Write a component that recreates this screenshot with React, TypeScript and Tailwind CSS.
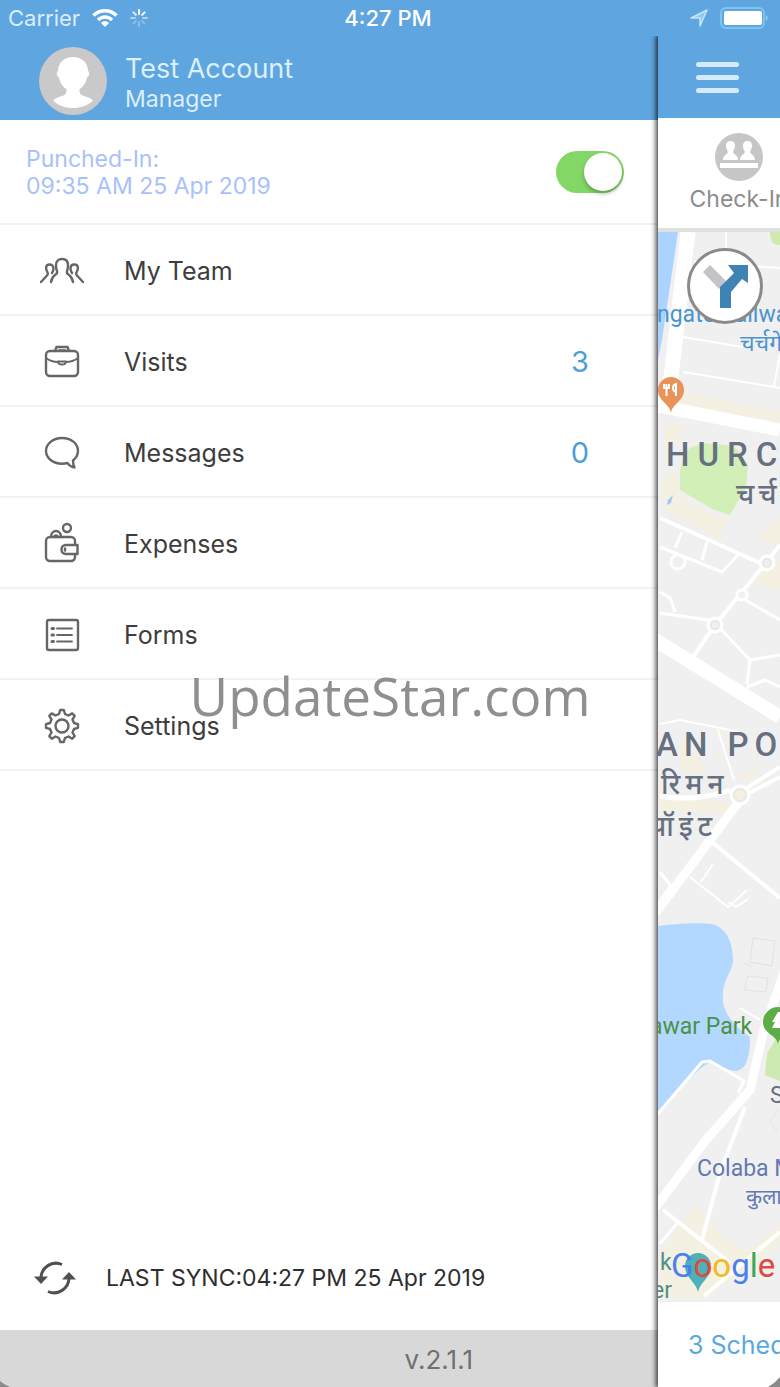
import { useState } from 'react';
import type { ReactNode } from 'react';

type MenuItem = {
    label: string;
    icon: ReactNode;
    count?: number;
};

const line = {
    fill: 'none',
    stroke: '#666666',
    strokeWidth: 2.4,
    strokeLinecap: 'round' as const,
    strokeLinejoin: 'round' as const,
};

function TeamIcon() {
    return (
        <svg viewBox="0 0 44 44" className="h-11 w-11" {...line}>
            <path d="M11 33c.5-3 1-5 4-7 2-1 2.500-2 2-4-1-1.500-1-3-1-6 0-4 2.500-6 6-6s6 2 6 6c0 3 0 4.500-1 6-.5 2 0 3 2 4 3 2 3.500 4 4 7" />
            <path d="M1 33l6-6.500c1-1 1-2 .5-3C5 19 6 15.500 9.500 15.500c2.500 0 4 1.500 4 4 0 2-.5 3-1.500 4.500" />
            <path d="M43 33l-6-6.500c-1-1-1-2-.5-3C39 19 38 15.500 34.500 15.500c-2.500 0-4 1.500-4 4 0 2 .5 3 1.500 4.500" />
        </svg>
    );
}

function BriefcaseIcon() {
    return (
        <svg viewBox="0 0 44 44" className="h-11 w-11" {...line}>
            <rect x="6" y="11" width="32" height="25" rx="4" />
            <path d="M15 11l1.500-4h11L29 11M19 10.500h6" />
            <path d="M6 18c4 3 8 4 12 4M38 18c-4 3-8 4-12 4M18 21.500h8c0 4-8 4-8 0z" strokeWidth="1.800" />
        </svg>
    );
}

function BubbleIcon() {
    return (
        <svg viewBox="0 0 44 44" className="h-11 w-11" {...line}>
            <path d="M22 7c9 0 16 5.500 16 13 0 4-2 7-5 9.500 0 3 .5 5 1.500 7-3-.5-5.500-2-7-4.500-1.800.5-3.500.7-5.500.7C13 32.700 6 27 6 20S13 7 22 7z" />
        </svg>
    );
}

function WalletIcon() {
    return (
        <svg viewBox="0 0 44 44" className="h-11 w-11" {...line}>
            <rect x="6" y="15" width="29" height="24" rx="4" />
            <path d="M11 15c0-8 10-8 10 0M14.500 15c0-2 3-2 3 0" />
            <circle cx="27" cy="6" r="4" />
            <path d="M37.500 23H26c-6 0-6 9 0 9h11.500z" fill="white" />
            <path d="M25 26.500v2" />
        </svg>
    );
}

function FormIcon() {
    return (
        <svg viewBox="0 0 44 44" className="h-11 w-11" {...line}>
            <rect x="7" y="7" width="31" height="30" rx="2" />
            <path d="M17 15.500h15M17 22h15M17 28.500h15" strokeWidth="1.800" />
            <path d="M12 15.500h1.500M12 22h1.500M12 28.500h1.500" strokeWidth="3" />
        </svg>
    );
}

function GearIcon() {
    return (
        <svg viewBox="0 0 44 44" className="h-11 w-11" {...line}>
            <circle cx="22" cy="22" r="6.500" />
            <path d="M19 10l1.200-4h3.600L25 10l3.500 1.500L32.200 9.400l2.500 2.500L32.500 15.500 34 19l4 1.200v3.600L34 25l-1.500 3.500 2.200 3.700-2.500 2.500-3.700-2.200L25 34l-1.200 4h-3.600L19 34l-3.500-1.500-3.700 2.200-2.500-2.500 2.200-3.700L10 25l-4-1.200v-3.600L10 19l1.500-3.500-2.200-3.600 2.500-2.500 3.700 2.100z" />
        </svg>
    );
}

const menu: MenuItem[] = [
    { label: 'My Team', icon: <TeamIcon /> },
    { label: 'Visits', icon: <BriefcaseIcon />, count: 3 },
    { label: 'Messages', icon: <BubbleIcon />, count: 0 },
    { label: 'Expenses', icon: <WalletIcon /> },
    { label: 'Forms', icon: <FormIcon /> },
    { label: 'Settings', icon: <GearIcon /> },
];

function StatusBar() {
    return (
        <div className="relative z-20 grid h-9 grid-cols-3 items-center bg-[#5fa5e0] pr-3 pl-2 text-[22px] leading-9 text-white">
            <div className="flex items-center gap-3 text-[#d9eefb]">
                <span>Carrier</span>
                <svg viewBox="0 0 26 20" className="h-5 w-[26px]" fill="none" stroke="white" strokeWidth="3.500">
                    <path d="M1.500 7.500c6.500-6.500 16.500-6.500 23 0M6 12c4-4 10-4 14 0" />
                    <path d="M13 19l-4-4c2-2.200 6-2.200 8 0z" fill="white" stroke="none" />
                </svg>
                <svg viewBox="0 0 18 18" className="h-[18px] w-[18px]" stroke="white" strokeWidth="2" strokeLinecap="round">
                    <path d="M9 1v4M14.600 3.400l-2.500 2.500" />
                    <path d="M3.400 3.400l2.500 2.500" opacity=".8" />
                    <path d="M17 9h-4M1 9h4" opacity=".5" />
                    <path d="M3.400 14.600l2.500-2.500M9 17v-4M14.600 14.600l-2.500-2.500" opacity=".3" />
                </svg>
            </div>
            <span className="text-center font-medium">4:27 PM</span>
            <div className="flex items-center justify-end gap-3">
                <svg viewBox="0 0 18 18" className="h-[18px] w-[18px]" fill="#8ccaf3" stroke="#c5e6fa" strokeWidth="1.500" strokeLinejoin="round">
                    <path d="M1 9l16-8-7 16V9z" />
                </svg>
                <svg viewBox="0 0 48 22" className="h-[22px] w-12">
                    <rect x="1" y="1" width="43" height="20" rx="5" fill="none" stroke="#7cc4f2" strokeWidth="2" />
                    <rect x="4" y="4" width="38" height="14" rx="2" fill="white" />
                    <path d="M46 8c2 1 2 5 0 6z" fill="#9fd3f5" />
                </svg>
            </div>
        </div>
    );
}

function Drawer() {
    const [punchedIn, setPunchedIn] = useState(true);

    return (
        <aside className="flex min-w-0 flex-1 flex-col bg-white">
            {/* Profile */}
            <header className="flex h-[84px] items-center gap-[18px] bg-[#5fa5e0] pt-1.5 pl-[39px] text-[#dceffc]">
                <svg viewBox="0 0 68 68" className="h-[68px] w-[68px]">
                    <circle cx="34" cy="34" r="34" fill="#c9c9c9" />
                    <path d="M34 10c9 0 15 6 15 14 2 1 1.500 5-1 6.500C47 36 44 40 40.500 42c0 3 0 5 3 6.500 4 1.500 8 2 10.500 5C48 59 42 61 34 61s-14-2-20-7.500c2.500-3 6.500-3.500 10.500-5 3-1.500 3-3.500 3-6.500C24 40 21 36 20 30.500c-2.500-1.500-3-5.500-1-6.500 0-8 6-14 15-14z" fill="white" />
                </svg>
                <div className="pt-1">
                    <h1 className="text-[27px] leading-8">Test Account</h1>
                    <p className="text-[23px] leading-7">Manager</p>
                </div>
            </header>

            {/* Punch-in state */}
            <div className="flex h-[105px] items-center justify-between border-b-2 border-[#f2f2f2] pr-[34px] pl-[26px]">
                <label htmlFor="punch" className="pt-0.5 text-[23px] leading-[27px] text-[#a9c1fb]">
                    Punched-In:
                    <br />
                    09:35 AM 25 Apr 2019
                </label>
                <input
                    id="punch"
                    type="checkbox"
                    role="switch"
                    checked={punchedIn}
                    onChange={(e) => setPunchedIn(e.target.checked)}
                    className="flex h-[42px] w-[68px] cursor-pointer appearance-none items-center rounded-full bg-gray-300 p-0.5 transition-colors before:h-[38px] before:w-[38px] before:rounded-full before:bg-white before:shadow-[0_3px_4px_rgba(0,0,0,0.25)] before:content-[''] checked:justify-end checked:bg-[#83d767]"
                />
            </div>

            <nav>
                {menu.map((item) => (
                    <button
                        key={item.label}
                        className="flex h-[91px] w-full cursor-pointer items-center border-b-2 border-[#f2f2f2] pt-0.5 pr-[69px] pl-10 text-left hover:bg-gray-50"
                    >
                        {item.icon}
                        <span className="ml-10 flex-1 text-[25px] leading-8 text-[#3d3d3d]">{item.label}</span>
                        {item.count !== undefined && (
                            <span className="text-[29px] leading-8 text-[#4b9fd9]">{item.count}</span>
                        )}
                    </button>
                ))}
            </nav>

            {/* Sync + version */}
            <button className="mt-auto flex h-[104px] cursor-pointer items-center gap-[30px] pl-[34px] text-left text-[23px] text-[#2e2e2e]">
                <svg viewBox="0 0 42 34" className="h-[34px] w-[42px]" fill="none" stroke="#505050" strokeWidth="3">
                    <path d="M28 3.500A15 15 0 0 0 7 17M14 30.500A15 15 0 0 0 35 17" />
                    <path d="M0 15.500h14L7 23zM28 18.500h14L35 11z" fill="#505050" stroke="none" />
                </svg>
                <span>LAST SYNC:04:27 PM 25 Apr 2019</span>
            </button>
            <footer className="flex h-[57px] items-center justify-end bg-[#d8d8d8] pt-0.5 pr-[185px] text-[26px] text-[#707070]">
                v.2.1.1
            </footer>
        </aside>
    );
}

function MapCanvas() {
    return (
        <svg viewBox="0 0 122 1070" preserveAspectRatio="xMinYMin slice" className="h-full w-full bg-[#f0f0f0]">
            {/* Parks, built-up blocks and water */}
            <path d="M0 0h20L4 108l-4 20z" fill="#aad4ff" />
            <path d="M112 0h10v13c-6 1-10-3-10-13z" fill="#cdebb0" />
            <g fill="#f5f1e2">
                <path d="M26 160l96 20v12L22 172zM8 190l18 4-6 16-14 8zM2 252l14-18 6 30 34 20 16 2-12 22-22-14-30-14zM100 305l22-20v30zM94 350l28-22v30zM20 510l8-4 20 36-24-4zM2 566l70 4-6 12-64-4zM76 545l24-10-8 14zM2 1020l34-46 30 30 24 16 32-28v20l-74 54H2z" />
            </g>
            <path d="M22 240c2-12 4-20 10-24l12-5 32 3 14 18-2 24-16 27-18-6-32-19z" fill="#d3efb8" />
            <path d="M10 268l5-5-2 8-4 2z" fill="#9ccbf9" />
            <path d="M0 694c14-2 38-4 55-2 12 4 20 16 20 36 0 12-12 20-10 42 2 14 14 26 27 35 0 20-4 34-15 34-9 0-18-9-25-9-18 10-34 32-52 51z" fill="#b3d8ff" />
            <path d="M109 821l13-20v48l-15-6z" fill="#cdebb0" />

            {/* Streets */}
            <g fill="none" stroke="white" strokeLinejoin="round">
                <path d="M30 0L13 145 6 175" strokeWidth="15" />
                <path d="M0 174l122 24" strokeWidth="13" />
                <path d="M-6 406l128 79" strokeWidth="14" />
                <path d="M80 571L-4 683M128 735l-23 66-13 57-44 50-54 72" strokeWidth="9" />
                <path d="M2 286l100 45M122 313l-20 25-45 55-22 32M55 611l67 55M89 556l33-21M89 562l33-17M5 978l67 53M46 1064l76-64M87 875l-25 66-18 67" strokeWidth="4" />
                <path d="M2 381l55 8M57 391l35 37 30-5M92 428l-3 24M84 366l38 22M2 315l62 25 16-17M17 316l7-16M44 328l5-18M2 360l10 6 5 14M89 455l18-7 15 7M2 640l12 15M-2 884l46-54 8-1 34 20-6 12M2 1012l18-22" strokeWidth="3" />
                <path d="M68 0v20M36 30l86 6M25 105l60 10M25 140l97 16M122 122l-6 32M32 645l38 30 19-17M43 650l12-18M82 776l20 12M60 498l16 50M2 492l20-4 60 12M2 668l10-14M70 670l8 5 12-8" strokeWidth="2" />
                <path d="M2 564c20 4 50 2 70-6" strokeWidth="5" />
            </g>
            <g fill="#f0f0f0" stroke="white" strokeWidth="3">
                <circle cx="109" cy="331" r="7" />
                <circle cx="84" cy="363" r="5" />
                <circle cx="57" cy="393" r="7" />
                <circle cx="20" cy="330" r="7" />
                <circle cx="82" cy="563" r="9" fill="#f5f1e2" />
            </g>
            <g fill="none" stroke="#e2e2e2">
                <path d="M95 706l22 3-3 25-22-4zM90 744l20 2-2 14-22-2zM94 735l-8-4M120 878l-8 12 8 10" />
                <circle cx="57" cy="393" r="4" />
                <circle cx="109" cy="331" r="4" />
                <circle cx="82" cy="563" r="6" />
            </g>

            {/* Place pins */}
            <path d="M13 181c-1-9-13-12-13-23a13 13 0 0 1 26 0c0 11-12 14-13 23z" fill="#e8935a" />
            <path d="M6 152v4h5v-4M8.500 152v12M18 164v-12c-4 1-4 7 0 8" fill="none" stroke="white" strokeWidth="2" />
            <path d="M120 812c-1-9-15-10-15-22a15 15 0 0 1 30 0c0 12-14 13-15 22z" fill="#5cad45" />
            <path d="M120 780l-6 10h3l-3 6h12v-16z" fill="white" />
            <path d="M40 1060c-2-10-13-14-13-26a13 13 0 0 1 26 0c0 12-11 16-13 26z" fill="#4fb0b8" />
        </svg>
    );
}

function MapPanel() {
    return (
        <main className="relative z-10 flex w-[122px] shrink-0 flex-col bg-white shadow-[-1px_0_5px_1px_rgba(0,0,0,0.75)]">
            <div className="flex h-[82px] items-center bg-[#5fa5e0] pl-[38px]">
                <button aria-label="Menu" className="flex h-[31px] w-[43px] cursor-pointer flex-col justify-between">
                    <span className="h-[5px] w-full rounded-sm bg-[#d5ebfa]" />
                    <span className="h-[5px] w-full rounded-sm bg-[#d5ebfa]" />
                    <span className="h-[5px] w-full rounded-sm bg-[#d5ebfa]" />
                </button>
            </div>

            <div className="h-[114px] overflow-hidden border-b-4 border-[#dfe1dd] pt-[15px] pl-[33px]">
                <button className="flex w-24 cursor-pointer flex-col items-center gap-1 text-[23px] leading-7 whitespace-nowrap text-[#8c8c8c]">
                    <svg viewBox="0 0 48 48" className="h-12 w-12">
                        <circle cx="24" cy="24" r="24" fill="#c6c6c6" />
                        <path d="M8 27c0-5 4-5 5-8-3-5-3-11 2.500-11s5.500 6 2.500 11c1 3 5 3 5 8zM25 27c0-5 4-5 5-8-3-5-3-11 2.500-11s5.500 6 2.500 11c1 3 5 3 5 8zM5 30h38v5H5z" fill="white" />
                    </svg>
                    Check-In
                </button>
            </div>

            <div className="relative flex-1 overflow-hidden font-[Roboto,'Noto_Sans',sans-serif] whitespace-nowrap">
                <div className="absolute inset-0">
                    <MapCanvas />
                </div>
                <span className="absolute top-[69px] -left-px text-[23px] leading-7 text-[#4a94cf]">ngate Railway</span>
                <span className="absolute top-[96px] left-[82px] text-[23px] leading-8 text-[#4a94cf]">चर्चगेट</span>
                <span className="absolute top-[203px] left-[8px] text-[33px] leading-10 font-medium tracking-[8px] text-[#66707f]">HURCHGATE</span>
                <span className="absolute top-[243px] left-[78px] text-[28px] leading-10 font-medium tracking-[4px] text-[#66707f]">चर्चगेट</span>
                <span className="absolute top-[493px] -left-[2px] text-[33px] leading-10 font-medium tracking-[6px] text-[#66707f]">AN POINT</span>
                <span className="absolute top-[533px] left-[3px] text-[28px] leading-10 font-medium tracking-[5px] text-[#66707f]">रिमन</span>
                <span className="absolute top-[575px] -left-[8px] text-[28px] leading-10 font-medium tracking-[5px] text-[#66707f]">पॉइंट</span>
                <span className="absolute top-[781px] -left-[8px] text-[23px] leading-7 text-[#4c9145]">awar Park</span>
                <span className="absolute top-[850px] left-[112px] text-[23px] leading-7 text-[#66707f]">Sassoon</span>
                <span className="absolute top-[923px] left-[39px] text-[23px] leading-7 text-[#6478b4]">Colaba Market</span>
                <span className="absolute top-[949px] left-[88px] text-[21px] leading-8 text-[#6478b4]">कुलाबा</span>
                <span className="absolute top-[1017px] left-[2px] text-[23px] leading-7 text-[#4f8f8c]">k</span>
                <span className="absolute top-[1045px] -left-[6px] text-[23px] leading-7 text-[#4f8f8c]">er</span>
                <span className="absolute top-[1014px] left-[13px] text-[33px] leading-10">
                    <span className="text-[#4a80ee]">G</span>
                    <span className="text-[#dd4b40]">o</span>
                    <span className="text-[#f2b91d]">o</span>
                    <span className="text-[#4a80ee]">g</span>
                    <span className="text-[#3fa757]">l</span>
                    <span className="text-[#dd4b40]">e</span>
                </span>
                <button
                    aria-label="Directions"
                    className="absolute top-[16px] left-[29px] flex h-[76px] w-[76px] cursor-pointer items-center justify-center rounded-full border-[3px] border-[#8a8a8a] bg-white"
                >
                    <svg viewBox="0 0 50 50" className="h-[50px] w-[50px]">
                        <path d="M3 11l7-7 16 16-7 8z" fill="#c4c4c8" />
                        <path d="M20 47V26l14-14-6-8h20v18l-6-4-11 13v16z" fill="#3f83b5" />
                    </svg>
                </button>
            </div>

            <div className="flex h-[85px] items-center overflow-hidden pl-[30px]">
                <a href="#schedule" className="text-[25px] leading-8 whitespace-nowrap text-[#5aa9de]">3 Scheduled</a>
            </div>
            <svg viewBox="0 0 12 10" className="absolute right-0 bottom-0 h-2.5 w-3" fill="#8a8a8a">
                <path d="M0 10l6-4 6-6v10z" />
            </svg>
        </main>
    );
}

export default function App() {
    return (
        <div className="relative flex min-h-screen w-full flex-col overflow-hidden bg-white font-[Inter,sans-serif]">
            <StatusBar />
            <div className="flex flex-1">
                <Drawer />
                <MapPanel />
            </div>
            <svg viewBox="0 0 10 6" className="absolute bottom-0 left-0 h-1.5 w-2.5" fill="#8a8a8a">
                <path d="M0 0l4 3 6 3H0z" />
            </svg>

            {/* Watermark */}
            <div className="pointer-events-none absolute inset-0 z-30 flex items-center justify-center pt-1">
                <span className="font-['Open_Sans',sans-serif] text-[53px] leading-none text-[#8f8f8f]">UpdateStar.com</span>
            </div>
        </div>
    );
}
